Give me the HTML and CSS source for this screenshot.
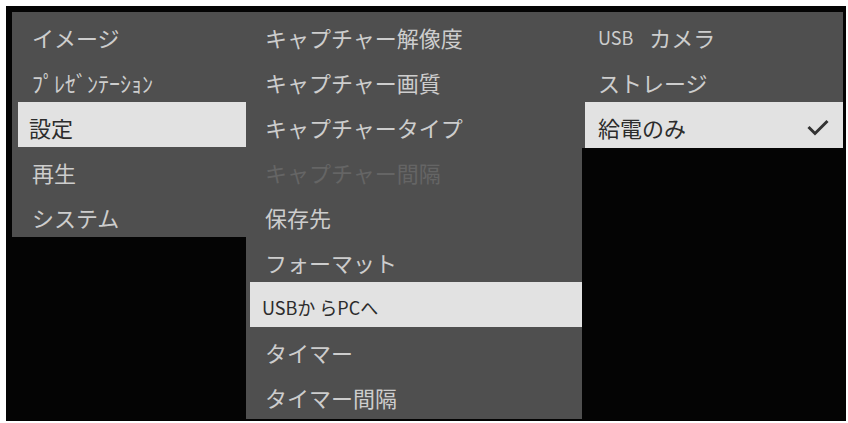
FILE: index.html
```html
<!DOCTYPE html>
<html lang="ja">
<head>
<meta charset="utf-8">
<title>メニュー</title>
<link rel="stylesheet" href="styles.css">
</head>
<body>
<div class="screen">
  <ul class="menu menu-main">
    <li class="item">イメージ</li>
    <li class="item">ﾌﾟﾚｾﾞﾝﾃｰｼｮﾝ</li>
    <li class="item selected">設定</li>
    <li class="item">再生</li>
    <li class="item">システム</li>
  </ul>
  <ul class="menu menu-sub">
    <li class="item">キャプチャー解像度</li>
    <li class="item">キャプチャー画質</li>
    <li class="item">キャプチャータイプ</li>
    <li class="item disabled">キャプチャー間隔</li>
    <li class="item">保存先</li>
    <li class="item">フォーマット</li>
    <li class="item selected small">USBか らPCへ</li>
    <li class="item">タイマー</li>
    <li class="item">タイマー間隔</li>
  </ul>
  <ul class="menu menu-opt">
    <li class="item"><span class="latin">USB</span>カメラ</li>
    <li class="item">ストレージ</li>
    <li class="item selected">給電のみ
      <svg class="check" width="22" height="17" viewBox="0 0 22 17"><polyline points="1.5,8 8,14.5 20.5,2" fill="none" stroke="#333" stroke-width="3"/></svg>
    </li>
  </ul>
</div>
</body>
</html>
```
FILE: styles.css
```css
html, body {
  margin: 0;
  padding: 0;
  background: #ffffff;
}
body {
  width: 848px;
  height: 423px;
  overflow: hidden;
  font-family: "Noto Sans CJK JP", "Noto Sans", sans-serif;
}
.screen {
  margin: 6px 0 0 6px;
  width: 834px;
  height: 409px;
  padding: 6px 0 0 6px;
  background: #040404;
  display: flex;
  align-items: flex-start;
}
.menu {
  list-style: none;
  margin: 0;
  padding: 0;
  background: #4f4f4f;
}
.menu-main {
  width: 234px;
}
.menu-sub {
  width: 336px;
  padding-bottom: 2px;
}
.menu-opt {
  width: 261px;
}
.item {
  height: 45px;
  box-sizing: border-box;
  padding: 4px 0 0 20px;
  display: flex;
  align-items: center;
  font-size: 22px;
  color: #cdcdcd;
  white-space: nowrap;
}
.menu-main .item.selected {
  margin-left: 6px;
  padding-left: 11px;
}
.menu-sub .item {
  padding-left: 19px;
}
.menu-sub .item.selected {
  margin-left: 4px;
  padding-left: 12px;
}
.menu-opt .item {
  padding-left: 16px;
}
.menu-opt .item.selected {
  margin-left: 3px;
  padding-left: 13px;
  height: 46px;
}
.item.selected {
  background: #e2e2e2;
  color: #2c2c2c;
}
.item.disabled {
  color: #656565;
}
.item.small {
  font-size: 18px;
}
.latin {
  font-size: 18px;
  margin-right: 16px;
}
.check {
  margin-left: auto;
  margin-right: 14px;
}
```
